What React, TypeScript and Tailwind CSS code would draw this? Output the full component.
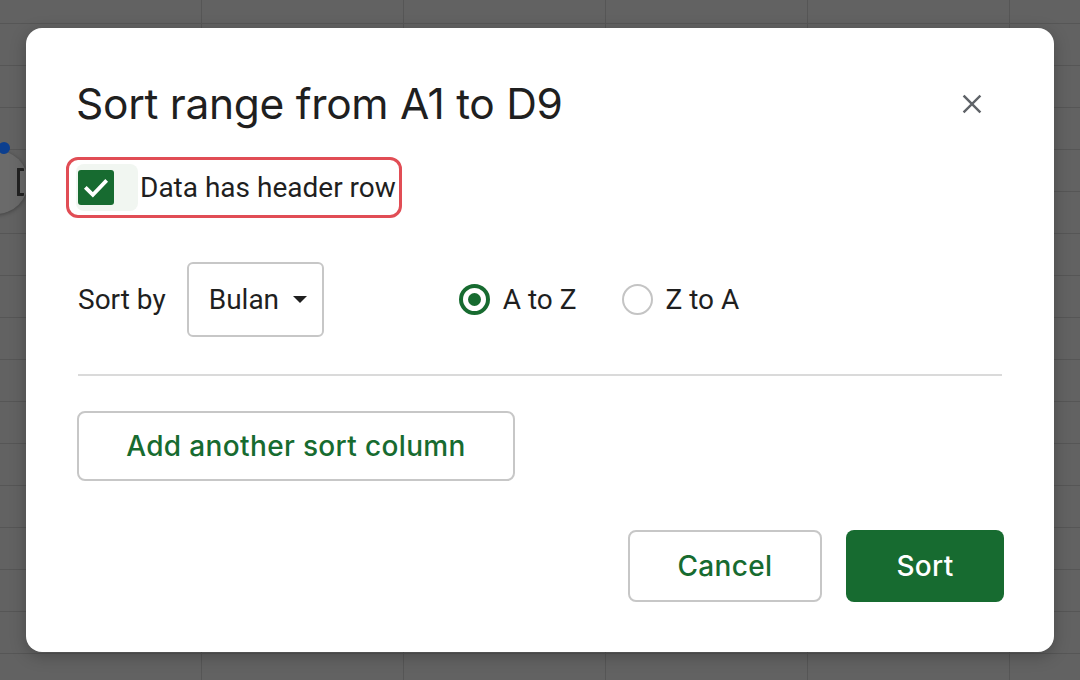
import { useState } from 'react';

const rows = Array.from({ length: 18 });
const cols = Array.from({ length: 6 });

function SheetBackdrop() {
  return (
    <div className="absolute inset-0 overflow-hidden bg-[#626262]">
      <div className="mt-[-18px] flex flex-col">
        {rows.map((_, r) => (
          <div key={r} className="flex">
            {cols.map((_, c) => (
              <div
                key={c}
                className="h-[42px] w-[202px] shrink-0 border-r border-b border-[#565656]"
              />
            ))}
          </div>
        ))}
      </div>
      {/* floating side button peeking out from the left edge */}
      <div className="absolute left-[-36px] top-[150px] flex h-[64px] w-[64px] items-center justify-end rounded-full bg-[#6a6a6a] pr-[4px] shadow-[0_1px_4px_rgba(0,0,0,0.35)]">
        <div className="h-[28px] w-[7px] rounded-[1px] border-[3px] border-r-0 border-[#222]" />
      </div>
      <div className="absolute left-[-2px] top-[142px] h-[12px] w-[12px] rounded-full bg-[#0c3f8f]" />
    </div>
  );
}

function CloseIcon() {
  return (
    <svg width="26" height="26" viewBox="0 0 24 24" fill="none">
      <path d="M5 5L19 19M19 5L5 19" stroke="#5f6368" strokeWidth="2.2" strokeLinecap="square" />
    </svg>
  );
}

function Radio({ checked, label, onClick }: { checked: boolean; label: string; onClick: () => void }) {
  return (
    <button type="button" onClick={onClick} className="flex items-center gap-[13px]">
      {checked ? (
        <span className="flex h-[31px] w-[31px] items-center justify-center rounded-full border-[4px] border-[#176b30]">
          <span className="h-[13px] w-[13px] rounded-full bg-[#176b30]" />
        </span>
      ) : (
        <span className="h-[31px] w-[31px] rounded-full border-2 border-[#c4c4c4]" />
      )}
      <span className="text-[28px] text-[#1f1f1f]">{label}</span>
    </button>
  );
}

export default function App() {
  const [hasHeader, setHasHeader] = useState(true);
  const [order, setOrder] = useState<'asc' | 'desc'>('asc');

  return (
    <div className="relative h-[680px] w-[1080px] overflow-hidden font-['Roboto',sans-serif]">
      <SheetBackdrop />

      <div className="absolute inset-0 flex items-center justify-center">
        <div className="flex h-[624px] w-[1028px] flex-col rounded-[16px] bg-white px-[52px] pb-[50px] pt-[45px] shadow-[0_4px_16px_rgba(0,0,0,0.25)]">
          <div className="flex shrink-0 items-start justify-between">
            <h2 className="ml-[-2px] font-['Inter',sans-serif] text-[42.5px] leading-[62px] tracking-[-0.3px] text-[#1f1f1f]">
              Sort range from A1 to D9
            </h2>
            <button type="button" className="mt-[1px] flex h-[60px] w-[60px] items-center justify-center rounded-full">
              <CloseIcon />
            </button>
          </div>

          <div className="mt-[22px] flex shrink-0">
            <label className="ml-[-12px] flex cursor-pointer items-center rounded-[12px] border-[3px] border-[#e14d55] py-[5px] pl-[9px] pr-[3px]">
              <span className="relative flex h-[45px] w-[60px] items-center">
                <span className="absolute inset-y-[-1px] left-[-2px] right-0 rounded-[8px] bg-[#f1f6f1]" />
                <span
                  className={`relative flex h-[35px] w-[36px] items-center justify-center rounded-[3px] ${hasHeader ? 'bg-[#176b30]' : 'border-2 border-[#5f6368] bg-white'}`}
                >
                  {hasHeader && (
                    <svg width="30" height="30" viewBox="0 0 24 24" fill="none">
                      <path d="M4.5 12.5L9.5 17.5L19.5 7" stroke="white" strokeWidth="3" strokeLinecap="square" />
                    </svg>
                  )}
                </span>
                <input
                  type="checkbox"
                  className="hidden"
                  checked={hasHeader}
                  onChange={(e) => setHasHeader(e.target.checked)}
                />
              </span>
              <span className="ml-[2px] text-[28px] text-[#1f1f1f]">Data has header row</span>
            </label>
          </div>

          <div className="mt-[44px] flex shrink-0 items-center">
            <span className="text-[28px] text-[#1f1f1f]">Sort by</span>
            <button
              type="button"
              className="ml-[21px] flex h-[75px] w-[137px] items-center rounded-[6px] border-2 border-[#c7c7c7] pl-[20px]"
            >
              <span className="text-[28px] text-[#1f1f1f]">Bulan</span>
              <svg className="ml-[14px]" width="14" height="8" viewBox="0 0 14 8">
                <path d="M0 0H14L7 7Z" fill="#1f1f1f" />
              </svg>
            </button>
            <div className="ml-[135px] flex items-center gap-[45px]">
              <Radio checked={order === 'asc'} label="A to Z" onClick={() => setOrder('asc')} />
              <Radio checked={order === 'desc'} label="Z to A" onClick={() => setOrder('desc')} />
            </div>
          </div>

          <div className="mt-[37px] h-[2px] w-full shrink-0 bg-[#dadada]" />

          <div className="mt-[35px] flex shrink-0">
            <button
              type="button"
              className="ml-[-1px] h-[70px] w-[438px] rounded-[8px] border-2 border-[#c7c7c7] font-['Inter',sans-serif] text-[28px] font-medium tracking-[0.35px] text-[#176b30]"
            >
              Add another sort column
            </button>
          </div>

          <div className="mr-[-2px] mt-auto flex shrink-0 justify-end gap-[24px]">
            <button
              type="button"
              className="h-[72px] w-[194px] rounded-[8px] border-2 border-[#c7c7c7] font-['Inter',sans-serif] text-[28px] font-medium tracking-[0.35px] text-[#176b30]"
            >
              Cancel
            </button>
            <button
              type="button"
              className="h-[72px] w-[158px] rounded-[8px] bg-[#176b30] font-['Inter',sans-serif] text-[28px] font-medium tracking-[0.35px] text-white"
            >
              Sort
            </button>
          </div>
        </div>
      </div>
    </div>
  );
}
